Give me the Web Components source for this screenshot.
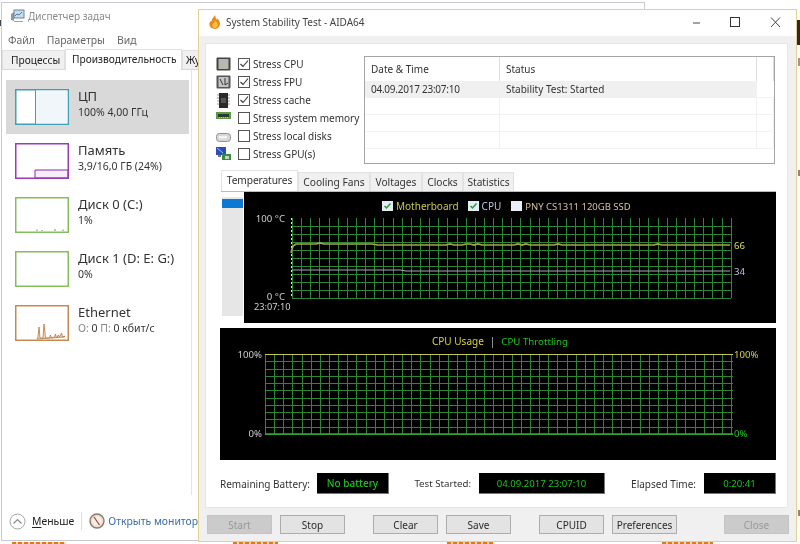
<!DOCTYPE html>
<html lang="ru"><head><meta charset="utf-8"><title>AIDA64</title>
<style>
html,body{margin:0;padding:0;background:#fff}
body{width:800px;height:544px;overflow:hidden;font-family:"Noto Sans","Open Sans",sans-serif;color:#222}
</style></head><body>
<desk-top>
  <task-manager></task-manager>
  <aida-window></aida-window>
</desk-top>
<template id="t-desk"><style>
:host{display:block;position:relative;width:800px;height:544px;overflow:hidden;background:#fff;filter:blur(.4px)}
.f{position:absolute}
.o{height:2px;bottom:0;background:repeating-linear-gradient(90deg,#dd7a1c 0 4px,#f6d9b4 4px 6px)}
</style>
<div class="f" style="right:0;top:20px;width:3px;height:25px;background:#2a2a2a"></div>
<div class="f" style="right:0;top:58px;width:2px;height:8px;background:#999"></div>
<div class="f" style="right:0;top:170px;width:2px;height:6px;background:#888"></div>
<div class="f" style="right:0;top:510px;width:2px;height:6px;background:#888"></div>
<div class="f" style="left:0;top:20px;width:1px;height:6px;background:#444"></div>
<div class="f o" style="left:12px;width:54px"></div>
<div class="f o" style="left:233px;width:45px"></div>
<div class="f o" style="left:447px;width:46px"></div>
<div class="f o" style="left:662px;width:51px"></div>
<slot></slot></template>

<template id="t-tm"><style>
:host{display:flex;flex-direction:column;position:absolute;left:1px;top:2px;width:644px;height:539px;box-sizing:border-box;background:#fff;border:1px solid #c9c9d6;font-size:10.2px;color:#333}
.title{height:26px;display:flex;align-items:center;gap:2px;padding-left:8px;color:#8a8a8a;font-size:10px;flex:none}
.title svg{display:block}
.menu{height:20px;display:flex;align-items:center;padding:2px 0 0 6px;box-sizing:border-box;color:#666;flex:none;font-size:10.4px}
.menu span{margin-right:12px}
.tabs{height:20px;display:flex;align-items:flex-end;border-bottom:1px solid #d8d8d8;flex:none}
.tab{height:19px;display:flex;align-items:center;background:#f0f0f0;border:1px solid #e0e0e0;border-bottom:0;box-sizing:border-box;padding-left:8px;color:#222}
.tab.a{height:21px;background:#fff;padding:0 0 2px 6px;position:relative;top:1px}
.main{flex:1;display:flex;min-height:0}
.side{width:190px;box-sizing:border-box;padding:10px 0 0 4px;border-right:1px solid #e3e3e3;margin-bottom:7px}
.foot{height:38px;display:flex;align-items:center;padding:0 0 0 7px;flex:none;font-size:10.4px}
.foot u{text-underline-offset:2px}
.sep{width:1px;height:18px;background:#ddd;margin:0 7px}
.lnk{color:#3a6ea5;margin-left:3px;white-space:nowrap;font-size:10.4px}
</style>
<div class="title"><svg width="16" height="14" viewBox="0 0 16 14"><path d="M1 5l3-2v9l-3-1z" fill="#8d9aa5"/><rect x="4" y="1" width="10" height="8" fill="#c8dcea" stroke="#6c8294"/><path d="M5 7l2-2 2 1 3-3" fill="none" stroke="#4a7ea5"/><path d="M4 12h9v1H4z" fill="#9aa5ae"/></svg><span>Диспетчер задач</span></div>
<div class="menu"><span>Файл</span><span>Параметры</span><span>Вид</span></div>
<div class="tabs">
  <div class="tab" style="width:63px;margin-left:0">Процессы</div>
  <div class="tab a" style="width:117px">Производительность</div>
  <div class="tab" style="width:60px;padding-left:3px">Жу</div>
</div>
<div class="main"><div class="side"><slot></slot></div></div>
<div class="foot">
  <svg width="17" height="17" viewBox="0 0 17 17"><circle cx="8.5" cy="8.5" r="7.500" fill="#fff" stroke="#a5a5a5"/><path d="M4.500 10.500l4-4 4 4" fill="none" stroke="#8a8a8a" stroke-width="1.200"/></svg>
  <span style="margin-left:6px;color:#222"><u>М</u>еньше</span><span class="sep"></span>
  <svg width="16" height="16" viewBox="0 0 16 16"><circle cx="8" cy="8" r="7" fill="#e8e0d4" stroke="#8a7a6a" stroke-width="1.400"/><circle cx="8" cy="8" r="4.600" fill="#f4f0ea"/><path d="M5 4l5.500 8" stroke="#c0392b" stroke-width="1.300"/></svg>
  <span class="lnk">Открыть монитор</span>
</div></template>

<template id="t-row"><style>
:host{display:flex;width:183px;height:54px;box-sizing:border-box;padding:9px 0 0 9px}
:host([selected]){background:#d9d9d9}
.t{margin-left:9px;margin-top:-1px;line-height:1}
.a{font-size:13px;line-height:17px;color:#333;white-space:nowrap}
.b{font-size:10.5px;line-height:14px;color:#333;white-space:nowrap}
::slotted(svg){display:block;flex:none}
</style><slot name="g"></slot><div class="t"><div class="a"><slot name="a"></slot></div><div class="b"><slot name="b"></slot></div></div></template>

<template id="t-aida"><style>
:host{display:flex;flex-direction:column;position:absolute;left:198px;top:9px;width:599px;height:533px;box-sizing:border-box;border:1px solid #e6d08e;background:#f0f0f0;font-size:10px;color:#333}
.tb{height:26px;box-sizing:border-box;padding-bottom:2px;background:#fff;display:flex;align-items:center;flex:none}
.tb .logo{margin-left:10px}
.tb .name{margin-left:5px;font-size:10px;color:#444;white-space:nowrap}
.ctl{margin-left:auto;display:flex;align-self:flex-start}
.ctl svg{display:block}
.body{flex:1;padding:8px 9px 0 7px;display:flex;flex-direction:column;min-height:0}
.panel{height:463px;box-sizing:border-box;background:#fff;padding:11px 11px 0 14px;display:flex;flex-direction:column;box-shadow:0 0 0 1px #e6e6e6}
.top{display:flex;height:109px;flex:none}
.list{width:148px;margin-left:-4px;display:flex;flex-direction:column}
.tabs{display:flex;margin:6px 0 0 1px;height:21px;align-items:flex-end;flex:none;font-size:10.2px}
.charts{display:flex;height:132px;flex:none;border-top:1px solid #bbb;margin-left:1px;box-sizing:border-box}
.sc{width:21px;margin:5px 0 0 1px;height:119px;background:#e6e6e6;flex:none}
.sc::before{content:"";display:block;height:9px;background:#0c78d4;position:relative;top:2px}
.sc2{width:1px;flex:none}
.status{display:grid;grid-template-columns:97px 72px 90px 126px 99px 72px;height:21px;margin-top:13px;align-items:center;flex:none}
.l{text-align:right;padding-right:8px;white-space:nowrap;color:#333}
.l.f{text-align:left;padding:0}
.l.n{font-size:9.7px}
.btns{display:flex;margin:8px 0 0 1px;flex:none}
</style>
<div class="tb">
  <svg class="logo" width="12" height="14" viewBox="0 0 12 15"><path d="M6 0c1 2 0 3 2 5 0-1 1-1 1-1 2 3 3 5 2 7-1 3-3 4-5 4-3 0-6-2-6-5 0-2 1-3 2-4 0 1 1 1 1 1C2 4 5 2 6 0z" fill="#e8891c"/><path d="M6 6c2 2 3 3 3 5s-2 3-3 3-3-1-3-3c0-1 1-1 1-2 1 0 2-1 2-3z" fill="#f8c040"/></svg>
  <span class="name">System Stability Test - AIDA64</span>
  <div class="ctl">
    <svg width="122" height="26" viewBox="0 0 122 26"><path d="M19 13h7" stroke="#666" stroke-width="1.200"/><rect x="56.500" y="7.500" width="9" height="9" fill="none" stroke="#333"/><path d="M97 7.500l9 9.500M106 7.500l-9 9.500" stroke="#444" fill="none"/></svg>
  </div>
</div>
<div class="body">
  <div class="panel">
    <div class="top">
      <div class="list">
        <stress-item checked><svg slot="i" width="15" height="14" viewBox="0 0 15 14"><rect x=".5" y=".5" width="14" height="13" rx="1" fill="#444"/><rect x="2.500" y="2" width="10" height="10" fill="#b8b8b0"/></svg>Stress CPU</stress-item>
        <stress-item checked><svg slot="i" width="15" height="14" viewBox="0 0 15 14"><rect x=".5" y=".5" width="14" height="13" rx="1" fill="#555"/><rect x="2.500" y="2" width="10" height="10" fill="#c4c4c4"/><path d="M4 4l3 6M9 3v7l3-2" stroke="#333" fill="none"/></svg>Stress FPU</stress-item>
        <stress-item checked><svg slot="i" width="15" height="15" viewBox="0 0 15 15"><rect x="3" y="0" width="9" height="15" fill="#2a2a2a"/><path d="M1 2h2M1 5h2M1 8h2M1 11h2M12 2h2M12 5h2M12 8h2M12 11h2" stroke="#999"/><rect x="5" y="5" width="5" height="5" fill="#555"/></svg>Stress cache</stress-item>
        <stress-item><svg slot="i" width="15" height="8" viewBox="0 0 15 8" style="margin-top:-4px"><rect width="15" height="7" fill="#5d9a4a"/><path d="M2 2h11v3H2z" fill="#2c3a28"/><path d="M3 5.500h1M5 5.500h1M7 5.500h1M9 5.500h1M11 5.500h1" stroke="#d8c850"/></svg>Stress system memory</stress-item>
        <stress-item><svg slot="i" width="15" height="9" viewBox="0 0 15 9" style="margin-top:3px"><rect x=".5" y=".5" width="14" height="8" rx="3" fill="#d8d8d8" stroke="#909090"/><rect x="3" y="3" width="8" height="2.500" fill="#f4f4f4"/></svg>Stress local disks</stress-item>
        <stress-item><svg slot="i" width="15" height="14" viewBox="0 0 15 14"><rect x="0" y="0" width="10" height="8" fill="#2a50b8"/><path d="M1 1l6 5" stroke="#9cc4f0"/><rect x="2" y="8" width="3" height="2" fill="#777"/><rect x="6" y="7" width="9" height="6" fill="#3c8a4a"/><rect x="9" y="9" width="4" height="3" fill="#c0d8b8"/></svg>Stress GPU(s)</stress-item>
      </div>
      <log-table></log-table>
    </div>
    <div class="tabs">
      <aida-tab active style="width:77px">Temperatures</aida-tab>
      <aida-tab style="width:72px">Cooling Fans</aida-tab>
      <aida-tab style="width:52px">Voltages</aida-tab>
      <aida-tab style="width:41px">Clocks</aida-tab>
      <aida-tab style="width:51px">Statistics</aida-tab>
    </div>
    <div class="charts"><div class="sc"></div><div class="sc2"></div><temp-graph></temp-graph></div>
    <cpu-graph></cpu-graph>
    <div class="status">
      <span class="l f">Remaining Battery:</span><status-box style="font-weight:500;font-size:10px">No battery</status-box>
      <span class="l n">Test Started:</span><status-box>04.09.2017 23:07:10</status-box>
      <span class="l">Elapsed Time:</span><status-box>0:20:41</status-box>
    </div>
  </div>
  <div class="btns">
    <aida-button disabled>Start</aida-button><aida-button style="margin-left:8px">Stop</aida-button>
    <aida-button style="margin-left:28px">Clear</aida-button><aida-button style="margin-left:8px">Save</aida-button>
    <aida-button style="margin-left:28px">CPUID</aida-button><aida-button style="margin-left:8px">Preferences</aida-button>
    <aida-button disabled style="margin-left:47px">Close</aida-button>
  </div>
</div></template>

<template id="t-stress"><style>
:host{display:flex;align-items:center;height:18px;white-space:nowrap;color:#333}
.i{width:15px;height:18px;display:flex;align-items:center;margin-right:7px;flex:none}
.c{width:12px;height:12px;box-sizing:border-box;border:1px solid #555;background:#fff;margin-right:3px;flex:none;display:block}
svg{display:block}
</style><span class="i"><slot name="i"></slot></span><span class="c"><svg id="k" width="10" height="10" viewBox="0 0 10 10"><path d="M1.500 5l2.500 2.500 5-6" fill="none" stroke="#333" stroke-width="1.100"/></svg></span><slot></slot></template>

<template id="t-log"><style>
:host{display:block;width:411px;height:108px;box-sizing:border-box;margin-top:1px;border:1px solid #a5a5a5;background:#fff;font-size:10px;color:#333;flex:none}
.r{display:grid;grid-template-columns:135px 257px 1fr;height:17px;border-bottom:1px solid #f2f2f2;box-sizing:border-box}
.r>span{padding-left:6px;line-height:17px;white-space:nowrap;border-right:1px solid #f0f0f0}
.h{height:24px;border-bottom:0}.h>span{line-height:24px;border-right:1px solid #dcdcdc}
.s>span:nth-child(-n+2){background:#f0f0f0;border-right-color:#f0f0f0}
.s>span:nth-child(3){border-right:0}
.d{letter-spacing:-.25px}
</style>
<div class="r h"><span>Date &amp; Time</span><span>Status</span><span></span></div>
<div class="r s"><span class="d">04.09.2017 23:07:10</span><span>Stability Test: Started</span><span></span></div>
<div class="r"><span></span><span></span><span></span></div>
<div class="r"><span></span><span></span><span></span></div>
<div class="r"><span></span><span></span><span></span></div>
</template>

<template id="t-tab"><style>
:host{display:flex;align-items:center;justify-content:center;box-sizing:border-box;height:19px;background:#f0f0f0;border:1px solid #e2e2e2;border-bottom:0;white-space:nowrap;color:#333}
:host([active]){height:21px;background:#fff;padding-bottom:2px;letter-spacing:-.1px}
</style><slot></slot></template>

<template id="t-btn"><style>
:host{display:flex;align-items:center;justify-content:center;width:65px;height:19px;box-sizing:border-box;background:#e3e3e3;border:1px solid #adadad;color:#2a2a2a;flex:none}
:host([disabled]){background:#cbcbcb;border-color:#c4c4c4;color:#989898}
</style><slot></slot></template>

<template id="t-box"><style>
:host{display:flex;align-items:center;justify-content:center;height:21px;background:#000;color:#1fc01f;font-size:9.6px;border-right:1px solid #777;border-bottom:1px solid #777;box-sizing:border-box;white-space:nowrap}
</style><slot></slot></template>

<template id="t-temp"><style>
:host{display:block;position:relative;width:532px;height:131px;background:#000;font-size:10px;color:#cfcfcf;flex:none}
#g{position:absolute;left:0;top:0;display:block}
.lg{display:flex;align-items:center;position:absolute;left:138px;top:7px;height:14px;white-space:nowrap}
.cb{margin-right:3px;display:block;flex:none}
.v{position:absolute;white-space:nowrap;line-height:10px;font-size:9.6px}
</style>
<svg id="g" width="532" height="131"></svg>
<div class="lg">
  <svg class="cb" width="11" height="10" viewBox="0 0 11 10"><rect width="11" height="10" fill="#e4ecf4"/><path d="M2.500 5l2 2 4-4.500" fill="none" stroke="#2a9a3a" stroke-width="1.500"/></svg>
  <span style="color:#c8c84e;margin-right:9px">Motherboard</span>
  <svg class="cb" width="11" height="10" viewBox="0 0 11 10"><rect width="11" height="10" fill="#e4ecf4"/><path d="M2.500 5l2 2 4-4.500" fill="none" stroke="#2a9a3a" stroke-width="1.500"/></svg>
  <span style="color:#b8c8dc;margin-right:10px">CPU</span>
  <svg class="cb" width="11" height="10" viewBox="0 0 11 10"><rect width="11" height="10" fill="#e8eef4"/></svg>
  <span style="color:#d8c0a0;font-size:9.5px">PNY CS1311 120GB SSD</span>
</div>
<span class="v" style="right:491px;top:22px">100 °C</span>
<span class="v" style="right:491px;top:100px">0 °C</span>
<span class="v" style="left:10px;top:110px;font-size:9.200px">23:07:10</span>
<span class="v" style="left:490px;top:49px;color:#d8d860">66</span>
<span class="v" style="left:490px;top:75px;color:#b8c4dc">34</span>
</template>

<template id="t-cpu"><style>
:host{display:block;position:relative;width:556px;height:132px;margin-top:5px;background:#000;font-size:10px;color:#ccc;flex:none}
#g{position:absolute;left:0;top:0;display:block}
.v{position:absolute;line-height:10px;white-space:nowrap;font-size:9.6px}
.h{position:absolute;left:212px;top:7px;white-space:nowrap;line-height:13px;display:flex}
</style>
<svg id="g" width="556" height="132"></svg>
<div class="h"><span style="color:#d8d040">CPU Usage</span><span style="color:#bbb;margin:0 6px">|</span><span style="color:#20c020;font-size:9.700px">CPU Throttling</span></div>
<span class="v" style="right:514px;top:22px">100%</span>
<span class="v" style="right:514px;top:101px">0%</span>
<span class="v" style="left:514px;top:22px;color:#d8d040">100%</span>
<span class="v" style="left:514px;top:101px;color:#20c020">0%</span>
</template>

<script>
function shell(name,tid,init){
  customElements.define(name,class extends HTMLElement{
    constructor(){super();const s=this.attachShadow({mode:'open'});s.appendChild(document.getElementById(tid).content.cloneNode(true));}
    connectedCallback(){if(init)init(this.shadowRoot,this);}
  });
}
function vlines(x0,x1,y0,y1,dx){let d='';for(let x=x0;x<=x1+.1;x+=dx)d+=`M${Math.round(x)+.5} ${y0}V${y1}`;return d;}
function hlines(x0,x1,ys){return ys.map(y=>`M${x0} ${Math.round(y)+.5}H${x1}`).join('');}
function wob(x0,x1,y,seed,p){
  let a=[];let s=seed;
  for(let x=x0;x<=x1;x+=4){s=(s*73+41)%101;a.push(x+','+(y+(s>100-p?-1:0)));}
  return a.join(' ');
}
shell('desk-top','t-desk');
shell('task-manager','t-tm',(s,h)=>{
 h.innerHTML=`
 <perf-row selected><svg slot="g" width="54" height="36" viewBox="0 0 54 36"><rect x=".75" y=".75" width="52.500" height="34.500" fill="#fff" stroke="#3f9fb4" stroke-width="1.500"/><rect x="21" y="1.500" width="31.500" height="33" fill="#f0f6fa"/><path d="M20.500 1v34" stroke="#3f9fb4"/></svg><span slot="a">ЦП</span><span slot="b">100% 4,00 ГГц</span></perf-row>
 <perf-row><svg slot="g" width="54" height="36" viewBox="0 0 54 36"><path d="M20 35V27h33v8z" fill="#f6eef9" stroke="#8b2aa8"/><rect x=".75" y=".75" width="52.500" height="34.500" fill="none" stroke="#9a3ab5" stroke-width="1.500"/></svg><span slot="a">Память</span><span slot="b">3,9/16,0 ГБ (24%)</span></perf-row>
 <perf-row><svg slot="g" width="54" height="36" viewBox="0 0 54 36"><rect x=".75" y=".75" width="52.500" height="34.500" fill="#fff" stroke="#85bd5c" stroke-width="1.500"/><path d="M22 34v-1.500M27 34v-1M40 34v-2M48 34v-1.500" stroke="#5c9c38"/></svg><span slot="a">Диск 0 (C:)</span><span slot="b">1%</span></perf-row>
 <perf-row><svg slot="g" width="54" height="36" viewBox="0 0 54 36"><rect x=".75" y=".75" width="52.500" height="34.500" fill="#fff" stroke="#85bd5c" stroke-width="1.500"/></svg><span slot="a">Диск 1 (D: E: G:)</span><span slot="b">0%</span></perf-row>
 <perf-row><svg slot="g" width="54" height="36" viewBox="0 0 54 36"><path d="M22 34l1-2 1-10 1 11 3 0 1-14 1.500 14h4l1-3 1 3 3-1 1-3 1 4 2-3 1 2 2-4 1 4 2-1v1z" fill="#f3e4d2" stroke="#b9763a" stroke-width=".8"/><rect x=".75" y=".75" width="52.500" height="34.500" fill="none" stroke="#c58a52" stroke-width="1.500"/></svg><span slot="a">Ethernet</span><span slot="b"><span style="color:#888">О:</span> 0 <span style="color:#888">П:</span> 0 кбит/с</span></perf-row>`;
});
shell('perf-row','t-row');
shell('aida-window','t-aida');
shell('stress-item','t-stress',(s,h)=>{if(!h.hasAttribute('checked'))s.getElementById('k').style.display='none';});
shell('log-table','t-log');
shell('aida-tab','t-tab');
shell('aida-button','t-btn');
shell('status-box','t-box');
shell('temp-graph','t-temp',(s)=>{
  const ys=[];for(let y=106;y>=34;y-=8)ys.push(y);
  let g=`<path d="${vlines(48,487,26,106,9.14)}${hlines(48,487,ys)}" stroke="#2f8633" fill="none"/>`;
  g+=`<path d="M47.500 26V106" stroke="#e0e0e0" stroke-dasharray="2 2" fill="none"/>`;
  g+=`<polyline points="47,61 49,54 ${wob(52,130,52,7,12)} ${wob(134,487,53,11,8)}" fill="none" stroke="#a4a848" stroke-width="1.700"/>`;
  g+=`<polyline points="48,78 ${wob(52,158,78,3,0)} ${wob(162,487,79,5,0)}" fill="none" stroke="#a8a8b8" stroke-width="1.200"/>`;
  s.getElementById('g').innerHTML=g;
});
shell('cpu-graph','t-cpu',(s)=>{
  const ys=[];for(let i=0;i<=11;i++)ys.push(26+80*i/11);
  let g=`<path d="${vlines(45,513,26,106,9.14)}${hlines(45,513,ys)}" stroke="#2f8633" fill="none"/>`;
  g+=`<path d="M45 26.500H513" stroke="#c8c850"/><path d="M45 106H513" stroke="#36a836" stroke-width="1.500"/>`;
  s.getElementById('g').innerHTML=g;
});
</script>
</body></html>
